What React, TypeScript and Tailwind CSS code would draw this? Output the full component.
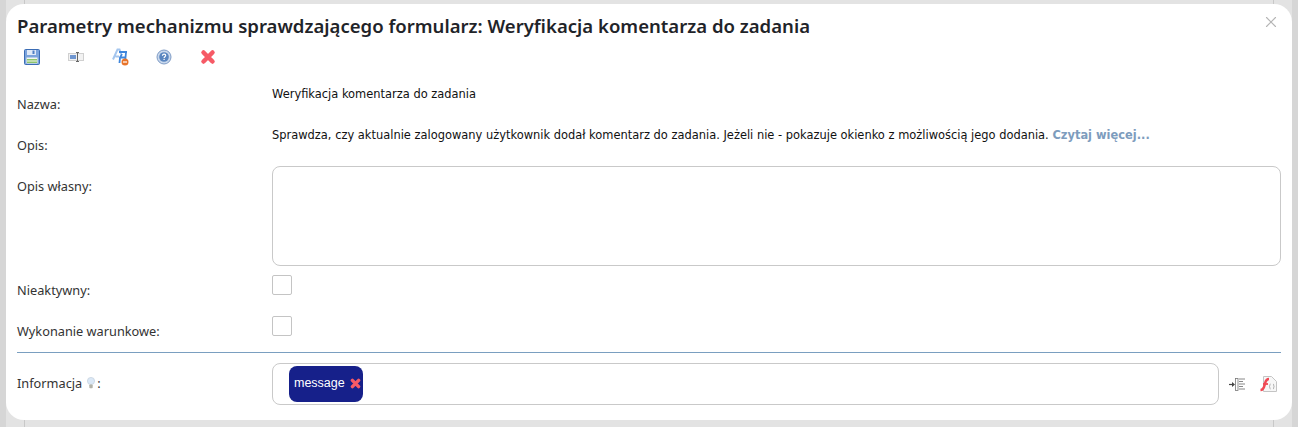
import { X } from "lucide-react";

const labelCls = "w-[255px] shrink-0 text-[12.75px] leading-[18px] text-[#333] font-['Noto_Sans',sans-serif]";

function SaveIcon() {
  return (
    <svg width="16" height="16" viewBox="0 0 16 16">
      <rect x="0.5" y="0.5" width="15" height="15" rx="1" fill="#7ba3dc" stroke="#3b6cb4" />
      <rect x="3" y="1" width="9" height="5" fill="#dfe9f7" />
      <rect x="8.5" y="1.5" width="2" height="3.5" fill="#4f7fc4" />
      <rect x="2.5" y="8.5" width="11" height="6" fill="#f4f7f0" />
      <rect x="3" y="10" width="10" height="1.5" fill="#8cc46a" />
      <rect x="3" y="12.5" width="10" height="1.5" fill="#8cc46a" />
    </svg>
  );
}

function RenameIcon() {
  return (
    <svg width="16" height="16" viewBox="0 0 16 16">
      <rect x="0.5" y="4.5" width="15" height="7" fill="#f2f2f2" stroke="#d0d0d0" />
      <rect x="2" y="6" width="6" height="4" fill="#6f96d0" />
      <path d="M8 3.5h3M9.5 3.5v9M8 12.5h3" stroke="#666" fill="none" />
    </svg>
  );
}

function TranslateIcon() {
  return (
    <svg width="17" height="18" viewBox="0 0 17 18">
      <path d="M1 11.500 5.500 1.500h2L9 6M3.500 8.500H7" stroke="#a5c6ee" strokeWidth="2" fill="none" />
      <path d="M7 4h8M14 4l-1 11M8 9.500h5M7.500 15 8 9.500 10 6" stroke="#3f86dc" strokeWidth="1.800" fill="none" />
      <circle cx="13" cy="14" r="3.500" fill="#e8742a" />
      <rect x="11" y="13.400" width="4" height="1.200" fill="#fff" />
    </svg>
  );
}

function HelpIcon() {
  return (
    <svg width="16" height="16" viewBox="0 0 16 16">
      <circle cx="8" cy="8" r="7" fill="#c9d8ec" stroke="#7f9cc6" />
      <circle cx="8" cy="8" r="4.8" fill="#5a86c0" />
      <path d="M6.4 6.8C6.5 5.700 7.200 5.200 8.100 5.200c1 0 1.600.6 1.600 1.400 0 1.200-1.600 1.200-1.600 2.400" stroke="#fff" strokeWidth="1.200" fill="none" />
      <rect x="7.500" y="9.800" width="1.200" height="1.200" fill="#fff" />
    </svg>
  );
}

function RedCross({ size, width }: { size: number; width: number }) {
  return (
    <svg width={size} height={size} viewBox="0 0 16 16">
      <path d="M3.500 3.500l9 9M12.500 3.500l-9 9" stroke="#f65a66" strokeWidth={width} strokeLinecap="round" />
    </svg>
  );
}

function BulbIcon() {
  return (
    <svg width="8" height="12" viewBox="0 0 8 12">
      <circle cx="4" cy="4" r="3.600" fill="#dbe8f6" stroke="#c3d0dd" strokeWidth="0.700" />
      <rect x="2.300" y="7.500" width="3.400" height="3.800" rx="0.800" fill="#b4b4aa" />
    </svg>
  );
}

function IndentIcon() {
  return (
    <svg width="16" height="13" viewBox="0 0 16 13">
      <path d="M0 6.500h3.500" stroke="#444" strokeWidth="1.200" />
      <path d="M3 4 6 6.500 3 9z" fill="#444" />
      <rect x="6.500" y="0.500" width="2.500" height="12" fill="#fff" stroke="#777" strokeWidth="0.800" />
      <path d="M10 1h6M10 3.500h4M10 6h6M10 8.500h4M10 11h6" stroke="#888" />
    </svg>
  );
}

function FlashIcon() {
  return (
    <svg width="17" height="16" viewBox="0 0 17 16">
      <path d="M3.500.500h8l5 5v10h-13z" fill="#f7f7f7" stroke="#c4c4c4" />
      <path d="M.5 14c3.500 0 3.500-3 4.500-6.500C5.800 4.500 7 3 9 3" stroke="#f04a55" strokeWidth="2.600" fill="none" />
      <path d="M3 8h5" stroke="#f04a55" strokeWidth="1.800" />
      <path d="M10.500 8c-1 0-.5 2-1 2.500.5.500 0 2.500 1 2.500M13 8c1 0 .5 2 1 2.500-.5.500 0 2.500-1 2.500" stroke="#999" strokeWidth="0.800" fill="none" />
    </svg>
  );
}

export default function App() {
  return (
    <div className="relative h-[427px] w-[1298px] overflow-hidden bg-[#d6d6d6] px-[6px] font-['DejaVu_Sans',sans-serif]">
      {/* page behind the dialog */}
      <div className="h-full w-[1286px] bg-[#e3e3e3] px-[18px]">
        <div className="h-full border-x border-[#c8c8c8]" />
      </div>

      <div className="absolute left-[6px] top-[4px] h-[416px] w-[1286px] rounded-[18px] bg-white px-[11px]">
        <button className="absolute right-[12px] top-[9px] text-[#b5b5b5]">
          <X size={18} strokeWidth={1.5} />
        </button>

        <h1 className="pt-[9px] text-[18.56px] leading-[26px] font-semibold text-[#1f2429] font-['Noto_Sans',sans-serif]">
          Parametry mechanizmu sprawdzającego formularz: Weryfikacja komentarza do zadania
        </h1>

        <div className="mt-[8px] flex h-[20px] items-center pl-[7px]">
          <div className="flex w-[44px]"><SaveIcon /></div>
          <div className="flex w-[44px]"><RenameIcon /></div>
          <div className="flex w-[44px]"><TranslateIcon /></div>
          <div className="flex w-[44px]"><HelpIcon /></div>
          <div className="flex w-[44px]"><RedCross size={16} width={4.5} /></div>
        </div>

        <div className="mt-[17px] flex h-[41px]">
          <div className={`${labelCls} pt-[11px]`}>Nazwa:</div>
          <div className="pt-[2px] text-[11.45px] leading-[16px] text-[#111]">Weryfikacja komentarza do zadania</div>
        </div>

        <div className="flex h-[41px]">
          <div className={`${labelCls} pt-[11px]`}>Opis:</div>
          <div className="pt-[2px] text-[11.45px] leading-[16px] text-[#111]">
            Sprawdza, czy aktualnie zalogowany użytkownik dodał komentarz do zadania. Jeżeli nie - pokazuje okienko z możliwością jego dodania.{" "}
            <span className="font-bold text-[#7d9cbd]">Czytaj więcej...</span>
          </div>
        </div>

        <div className="flex h-[109px]">
          <div className={`${labelCls} pt-[11px]`}>Opis własny:</div>
          <textarea className="h-[100px] w-[1009px] resize-none rounded-[8px] border border-[#c9c9c9]" />
        </div>

        <div className="flex h-[41px]">
          <div className={`${labelCls} pt-[6px]`}>Nieaktywny:</div>
          <div className="h-[20px] w-[20px] rounded-[2px] border border-[#c4c4c4]" />
        </div>

        <div className="flex h-[36px]">
          <div className={`${labelCls} pt-[6px]`}>Wykonanie warunkowe:</div>
          <div className="h-[20px] w-[20px] rounded-[2px] border border-[#c4c4c4]" />
        </div>

        <div className="border-t border-[#7a9fc0]" />

        <div className="mt-[10px] flex items-center">
          <div className={`${labelCls} flex items-center pb-[2px]`}>
            Informacja
            <span className="ml-[5px] mr-[2px] flex"><BulbIcon /></span>:
          </div>
          <div className="flex h-[42px] w-[947px] items-center rounded-[8px] border border-[#c9c9c9] pl-[16px]">
            <span className="flex h-[36px] items-center gap-[5px] rounded-[8px] bg-[#16208a] pb-[2px] pl-[5px] pr-[2px] text-[12.5px] text-white font-['Liberation_Sans',sans-serif]">
              message <RedCross size={11} width={5} />
            </span>
          </div>
          <div className="ml-[10px] flex w-[31px]"><IndentIcon /></div>
          <div className="flex"><FlashIcon /></div>
        </div>
      </div>
    </div>
  );
}
